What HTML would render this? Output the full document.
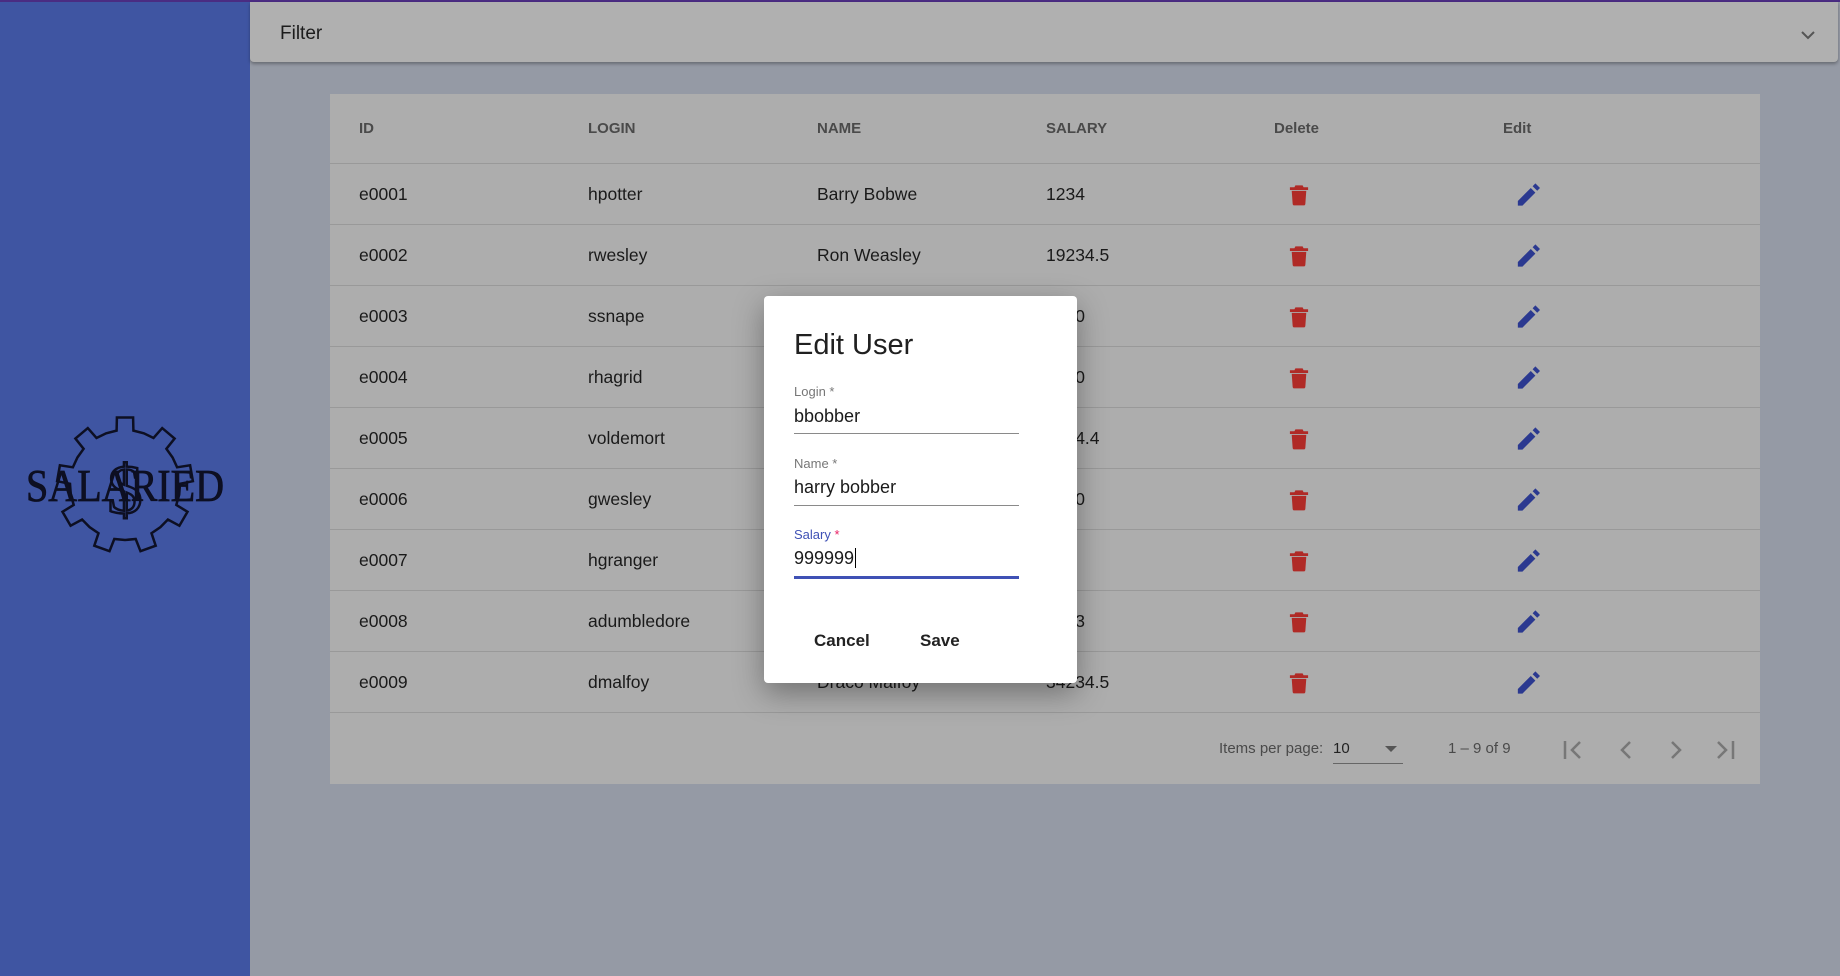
<!DOCTYPE html>
<html><head><meta charset="utf-8"><style>
*{box-sizing:border-box;margin:0;padding:0}
body{width:1840px;height:976px;overflow:hidden;background:#959aa5;font-family:"Liberation Sans",Roboto,sans-serif;position:relative}
.top{position:absolute;left:0;top:0;width:1840px;height:2px;background:#4a2c82}
.side{position:absolute;left:0;top:2px;width:250px;height:974px;background:#3f55a2}
.filter{position:absolute;left:250px;top:2px;width:1588px;height:60px;background:#b0b0b0;border-radius:0 0 4px 4px;box-shadow:0 2px 3px rgba(0,0,0,.3)}
.filter span{position:absolute;left:30px;top:21px;font-size:19px;color:#1c1c1c}
.card{position:absolute;left:330px;top:94px;width:1430px;height:690px;background:#adadad}
.row{position:absolute;left:0;width:1430px;height:61px;border-bottom:1px solid #999}
.c{position:absolute;top:0;line-height:61px;font-size:17.5px;color:#1a1a1a}
.h .c{font-size:15px;color:#4a4a4a;line-height:70px;font-weight:bold}
.ico{position:absolute;top:19px}
.dlg{position:absolute;left:764px;top:296px;width:313px;height:387px;background:#fff;border-radius:4px;box-shadow:0 10px 30px rgba(0,0,0,.35)}
.dlg h2{position:absolute;left:30px;top:33px;font-weight:normal;font-size:29px;color:#202020}
.lab{position:absolute;left:30px;font-size:13px;color:#777}
.val{position:absolute;left:30px;font-size:18px;color:#1a1a1a}
.ul{position:absolute;left:30px;width:225px;height:1px;background:#8a8a8a}
.btn{position:absolute;top:335px;font-size:17px;font-weight:bold;color:#222}
.pg{position:absolute;font-size:15px;color:#4a4a4a;top:646px}
</style></head><body>
<div class="top"></div>
<div class="side">
<svg width="250" height="200" viewBox="0 0 250 200" style="position:absolute;left:0;top:381px">
<path id="gear" fill="none" stroke="#0d0f22" stroke-width="2.5"/>
<text x="125" y="130" text-anchor="middle" font-family="Liberation Serif,serif" font-size="70" fill="none" stroke="#0d0f22" stroke-width="2.5">$</text>
<text x="125" y="118" text-anchor="middle" font-family="Liberation Serif,serif" font-size="46" fill="#0d0f22" stroke="#0d0f22" stroke-width="0.8" textLength="198" lengthAdjust="spacingAndGlyphs">SALARIED</text>
</svg>
</div>
<div class="filter"><span>Filter</span>
<svg width="16" height="10" style="position:absolute;left:1550px;top:28px"><path d="M2 2 L8 8 L14 2" stroke="#555" stroke-width="2" fill="none"/></svg></div>
<div class="card">
<div class="row h" style="top:0;height:70px"><span class="c" style="left:29px">ID</span><span class="c" style="left:258px">LOGIN</span><span class="c" style="left:487px">NAME</span><span class="c" style="left:716px">SALARY</span><span class="c" style="left:944px">Delete</span><span class="c" style="left:1173px">Edit</span></div>
<div id="rows"></div>
<span class="pg" style="left:889px">Items per page:</span>
<span class="pg" style="left:1003px;color:#222">10</span>
<div style="position:absolute;left:1003px;top:669px;width:70px;height:1px;background:#666"></div>
<svg width="12" height="8" style="position:absolute;left:1055px;top:652px"><path d="M0 0 L12 0 L6 6Z" fill="#555"/></svg>
<span class="pg" style="left:1118px">1 – 9 of 9</span>
<svg width="180" height="30" style="position:absolute;left:1232px;top:641px" fill="none" stroke="#777" stroke-width="2.5"><path d="M3 6 V24 M18 7 L10 15 L18 23"/><path d="M68 7 L60 15 L68 23"/><path d="M110 7 L118 15 L110 23"/><path d="M156 7 L164 15 L156 23 M171 6 V24"/></svg>
</div>
<div class="dlg">
<h2>Edit User</h2>
<span class="lab" style="top:88px">Login *</span><span class="val" style="top:110px">bbobber</span><div class="ul" style="top:137px"></div>
<span class="lab" style="top:160px">Name *</span><span class="val" style="top:181px">harry bobber</span><div class="ul" style="top:209px"></div>
<span class="lab" style="top:231px;color:#3f51b5">Salary <span style="color:#e91e63">*</span></span><span class="val" style="top:252px">999999<span style="border-left:1px solid #000;margin-left:1px"></span></span><div class="ul" style="top:280px;height:3px;background:#3f51b5"></div>
<span class="btn" style="left:50px">Cancel</span><span class="btn" style="left:156px">Save</span>
</div>
<script>
var cx=125,cy=102,Ro=68,Ri=55,n=9,p="";
for(var i=0;i<n;i++){var a=i*2*Math.PI/n-Math.PI/2,s=2*Math.PI/n;
var pts=[[Ri,a-s*0.5],[Ri,a-s*0.22],[Ro,a-s*0.17],[Ro,a+s*0.17],[Ri,a+s*0.22]];
pts.forEach(function(q,j){var x=(cx+q[0]*Math.cos(q[1])).toFixed(1),y=(cy+q[0]*Math.sin(q[1])).toFixed(1);p+=(i==0&&j==0?"M":"L")+x+" "+y+" ";});}
document.getElementById("gear").setAttribute("d",p+"Z");
var d=[["e0001","hpotter","Barry Bobwe","1234"],["e0002","rwesley","Ron Weasley","19234.5"],["e0003","ssnape","","3420"],["e0004","rhagrid","","3420"],["e0005","voldemort","","3234.4"],["e0006","gwesley","","3420"],["e0007","hgranger","",""],["e0008","adumbledore","","3423"],["e0009","dmalfoy","Draco Malfoy","34234.5"]];
var h="";d.forEach(function(r,i){h+='<div class="row" style="top:'+(70+i*61)+'px"><span class="c" style="left:29px">'+r[0]+'</span><span class="c" style="left:258px">'+r[1]+'</span><span class="c" style="left:487px">'+r[2]+'</span><span class="c" style="left:716px">'+r[3]+'</span>'+
'<svg class="ico" style="left:959px" width="20" height="23" viewBox="0 0 22 24"><path d="M7 2 H15 L16 4 H21 V7 H1 V4 H6Z M3 8 H19 L18 22 Q18 24 16 24 H6 Q4 24 4 22Z" fill="#b02a26"/></svg>'+
'<svg class="ico" style="left:1186px" width="24" height="23" viewBox="0 0 26 24"><path d="M2 19 L16 5 L21 10 L7 24 H2Z M18 3 L21 0 L26 5 L23 8Z" fill="#2b3990"/></svg></div>'});
document.getElementById("rows").innerHTML=h;
</script>
</body></html>
